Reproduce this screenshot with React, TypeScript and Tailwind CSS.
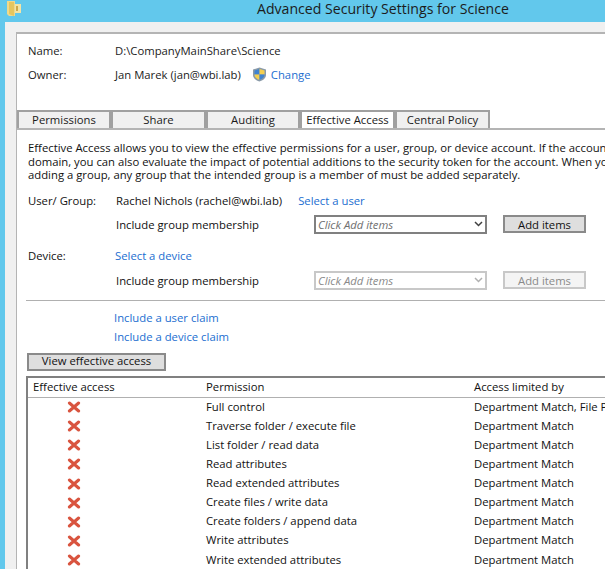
const font = { fontFamily: '"Open Sans", "Noto Sans", sans-serif' };

const rows = [
    ['Full control', 'Department Match, File Permissions'],
    ['Traverse folder / execute file', 'Department Match'],
    ['List folder / read data', 'Department Match'],
    ['Read attributes', 'Department Match'],
    ['Read extended attributes', 'Department Match'],
    ['Create files / write data', 'Department Match'],
    ['Create folders / append data', 'Department Match'],
    ['Write attributes', 'Department Match'],
    ['Write extended attributes', 'Department Match'],
];

function FolderIcon() {
    return (
        <svg width="14" height="15" viewBox="0 0 14 15" className="shrink-0">
            <path d="M0 0h8v15H2L0 13z" fill="#efd98c" />
            <path d="M2 1h5v14l-5-2z" fill="#e6c65f" />
            <path d="M8 3h6v9H8z" fill="#f3e4a6" />
            <path d="M9 5h2v5H9z" fill="#cfa94a" />
        </svg>
    );
}

function ShieldIcon() {
    return (
        <svg width="15" height="15" viewBox="0 0 15 15" className="shrink-0">
            <path d="M7.5 0.5 L14 2.5 V8 C14 11.5 10.5 13.5 7.5 14.5 C4.5 13.5 1 11.5 1 8 V2.5 Z" fill="#8a9aa8" />
            <path d="M7.5 2 V7.5 H2.5 V3.4 Z" fill="#3f83d0" />
            <path d="M7.5 2 L12.5 3.4 V7.5 H7.5 Z" fill="#f4cf4f" />
            <path d="M2.5 7.5 H7.5 V13 C5 12 2.5 10.5 2.5 7.5 Z" fill="#f4cf4f" />
            <path d="M7.5 7.5 H12.5 C12.5 10.5 10 12 7.5 13 Z" fill="#3f83d0" />
        </svg>
    );
}

function RedX() {
    return (
        <svg width="14" height="12" viewBox="0 0 14 12">
            <path d="M2.4 2 L11.6 10 M11.6 2 L2.4 10" stroke="#d9543f" strokeWidth="3" strokeLinecap="round" />
        </svg>
    );
}

function Chevron({ color }: { color: string }) {
    return (
        <svg width="9" height="6" viewBox="0 0 9 6">
            <path d="M1 1 L4.5 4.5 L8 1" fill="none" stroke={color} strokeWidth="1.5" />
        </svg>
    );
}

function Tab({ label, width, active }: { label: string; width: string; active?: boolean }) {
    return (
        <div
            className={`${width} flex h-[18px] items-center justify-center border-2 border-b-0 border-[#a0a0a0] text-[11.3px] text-[#1a1a1a] ${
                active ? 'bg-white' : 'bg-[#f0f0f0]'
            }`}
        >
            {label}
        </div>
    );
}

function Combo({ disabled }: { disabled?: boolean }) {
    return (
        <div
            className={`flex h-[19px] w-[173px] items-center justify-between border-2 bg-white pl-[2px] pr-[2px] text-[11.3px] italic ${
                disabled ? 'border-[#c8c8c8] text-[#8a8a8a]' : 'border-[#808080] text-[#707070]'
            }`}
        >
            <span>Click Add items</span>
            <Chevron color={disabled ? '#b0b0b0' : '#404040'} />
        </div>
    );
}

function AddButton({ disabled }: { disabled?: boolean }) {
    return (
        <div
            className={`ml-[16px] flex h-[18px] w-[83px] items-center justify-center border-2 text-[11.3px] ${
                disabled ? 'border-[#c8c8c8] bg-[#f4f4f4] text-[#8a8a8a]' : 'border-[#8a8a8a] bg-[#dedede] text-[#111]'
            }`}
        >
            Add items
        </div>
    );
}

function MembershipRow({ disabled }: { disabled?: boolean }) {
    return (
        <div className="flex items-center pl-[99px]">
            <span className="w-[198px] text-[11.3px] text-[#111]">Include group membership</span>
            <Combo disabled={disabled} />
            <AddButton disabled={disabled} />
        </div>
    );
}

export default function App() {
    return (
        <div style={font} className="h-[569px] w-[605px] overflow-hidden whitespace-nowrap bg-[#62c8ec]">
            <div className="flex h-[22px] items-start pl-[7px] pt-[1px]">
                <FolderIcon />
                <div className="-mt-[1px] ml-[236px] text-[14.1px] leading-[18px] text-[#1c1c1c]">
                    Advanced Security Settings for Science
                </div>
            </div>
            <div className="ml-[5px] h-[547px] bg-[#f0f0f0] pl-[11px] pt-[10px]">
                <div className="h-[540px] border-l border-t-2 border-[#b4b4b4] bg-white">
                    <div className="flex flex-col gap-[9px] pl-[11px] pt-[9px] text-[11.3px] leading-[15px] text-[#222]">
                        <div className="flex">
                            <span className="w-[87px]">Name:</span>
                            <span>D:\CompanyMainShare\Science</span>
                        </div>
                        <div className="flex items-center">
                            <span className="w-[87px]">Owner:</span>
                            <span>Jan Marek (jan@wbi.lab)</span>
                            <span className="ml-[11px] mr-[4px]">
                                <ShieldIcon />
                            </span>
                            <span className="text-[#1b6ed0]">Change</span>
                        </div>
                    </div>

                    <div className="mt-[28px] flex border-b-2 border-[#b4b4b4]">
                        <Tab label="Permissions" width="w-[94px]" />
                        <Tab label="Share" width="w-[95px]" />
                        <Tab label="Auditing" width="w-[94px]" />
                        <Tab label="Effective Access" width="w-[95px]" active />
                        <Tab label="Central Policy" width="w-[95px]" />
                    </div>

                    <div className="pl-[11px] pt-[11px] text-[11.3px] leading-[13.5px] text-[#111]">
                        <p>Effective Access allows you to view the effective permissions for a user, group, or device account. If the account is a member of a</p>
                        <p>domain, you can also evaluate the impact of potential additions to the security token for the account. When you add a user or</p>
                        <p>adding a group, any group that the intended group is a member of must be added separately.</p>
                    </div>

                    <div className="mt-[11px] flex flex-col text-[11.3px] leading-[15px]">
                        <div className="flex pl-[11px] text-[#111]">
                            <span className="w-[88px]">User/ Group:</span>
                            <span>Rachel Nichols (rachel@wbi.lab)</span>
                            <span className="ml-[16px] text-[#1b6ed0]">Select a user</span>
                        </div>
                        <div className="mt-[7px]">
                            <MembershipRow />
                        </div>
                        <div className="mt-[14px] flex pl-[11px] text-[#111]">
                            <span className="w-[87px]">Device:</span>
                            <span className="text-[#1b6ed0]">Select a device</span>
                        </div>
                        <div className="mt-[8px]">
                            <MembershipRow disabled />
                        </div>
                    </div>

                    <div className="ml-[9px] mt-[10px] h-[1px] bg-[#b0b0b0]" />

                    <div className="flex flex-col gap-[4px] pl-[97px] pt-[9px] text-[11.3px] leading-[15px] text-[#1b6ed0]">
                        <span>Include a user claim</span>
                        <span>Include a device claim</span>
                    </div>

                    <div className="ml-[10px] mt-[9px] flex h-[18px] w-[139px] items-center justify-center border-2 border-[#8a8a8a] bg-[#dedede] text-[11.3px] text-[#111]">
                        View effective access
                    </div>

                    <div className="ml-[9px] mt-[5px] border-l-2 border-t-2 border-[#808080] text-[11.3px] text-[#111]">
                        <div className="flex h-[20px] items-center border-b border-[#b0b0b0] pl-[5px]">
                            <span className="w-[173px] shrink-0">Effective access</span>
                            <span className="w-[268px] shrink-0">Permission</span>
                            <span className="shrink-0">Access limited by</span>
                        </div>
                        {rows.map(([permission, limit]) => (
                            <div key={permission} className="flex h-[19.125px] items-center pl-[5px]">
                                <span className="flex w-[173px] shrink-0 pl-[34px]">
                                    <RedX />
                                </span>
                                <span className="w-[268px] shrink-0">{permission}</span>
                                <span className="shrink-0">{limit}</span>
                            </div>
                        ))}
                    </div>
                </div>
            </div>
        </div>
    );
}
